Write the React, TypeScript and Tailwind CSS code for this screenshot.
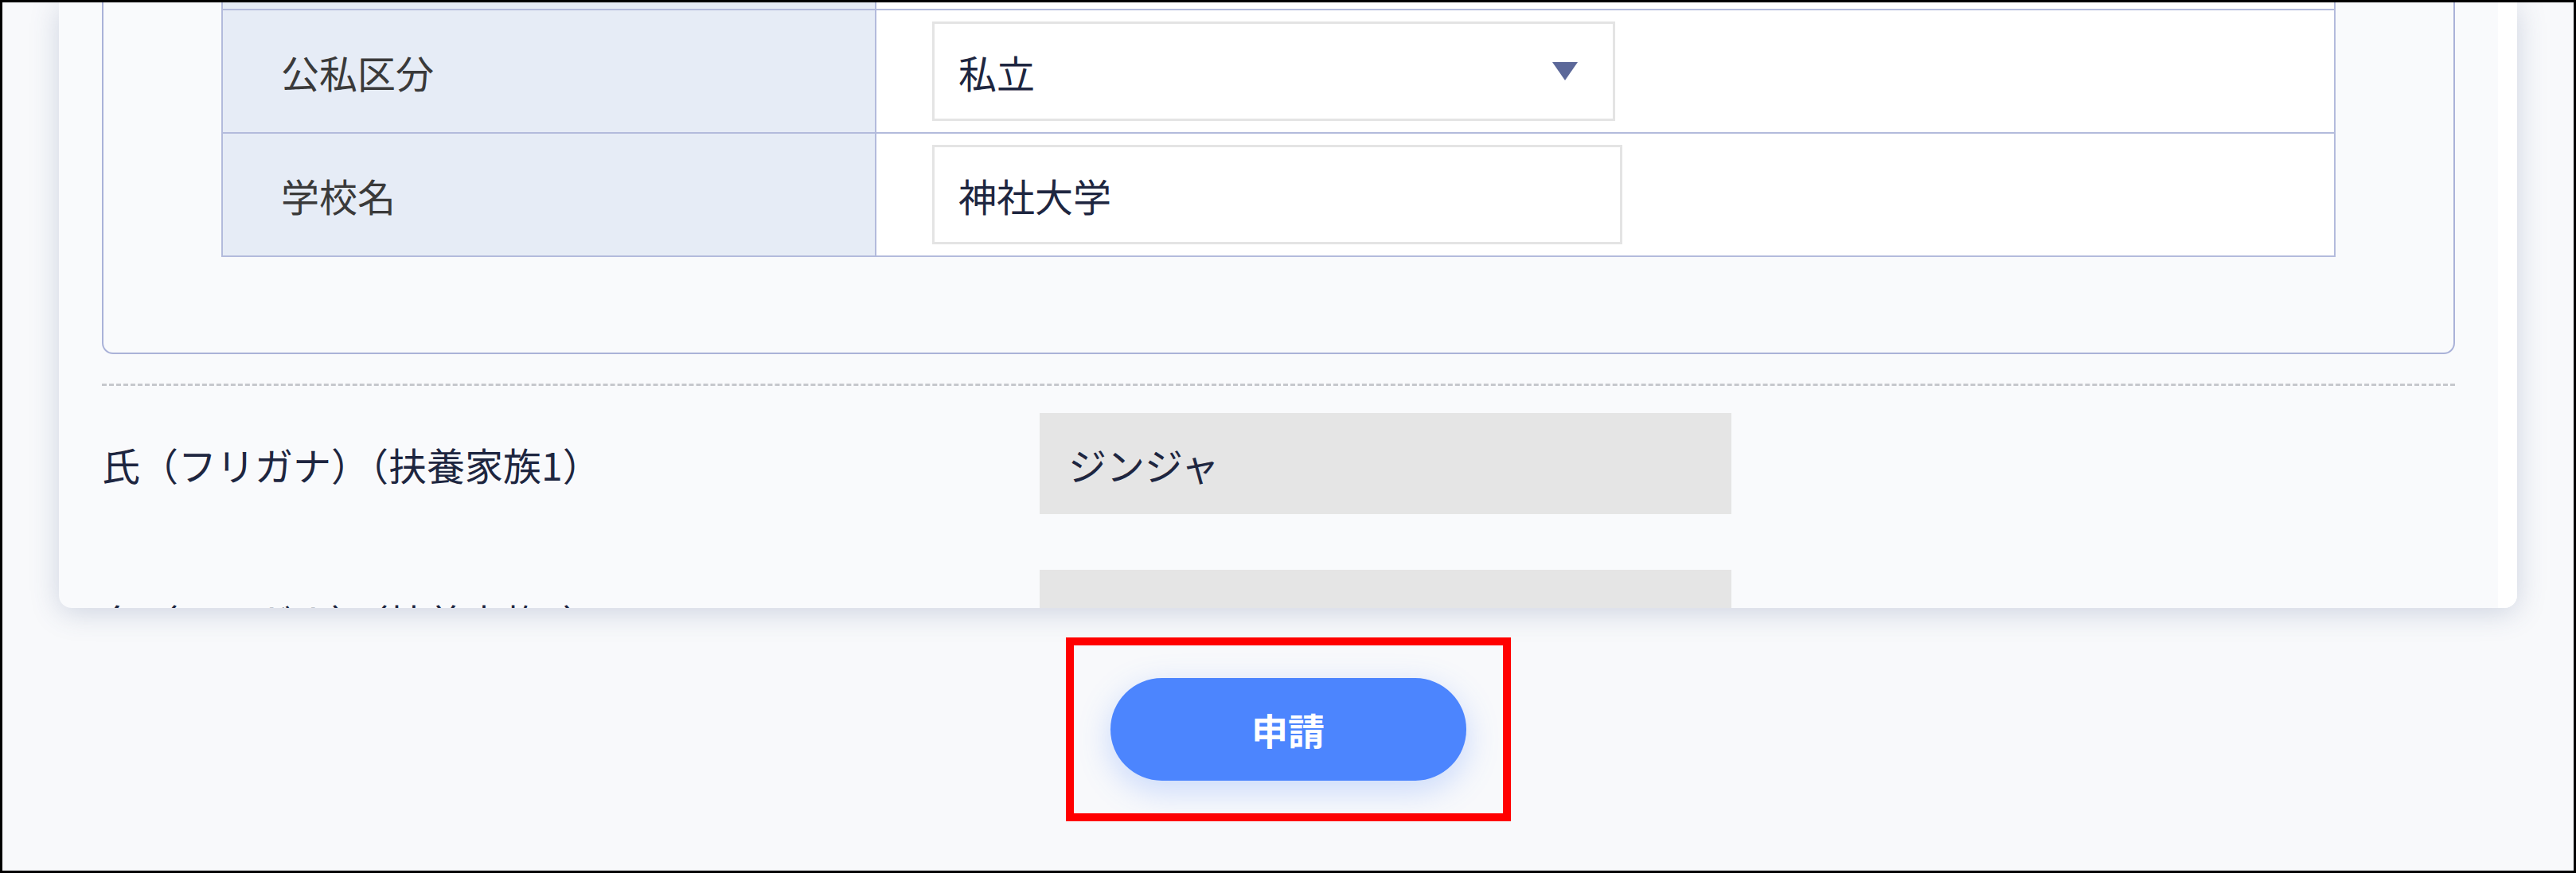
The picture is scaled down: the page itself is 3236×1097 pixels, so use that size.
const font = { fontFamily: '"Noto Sans CJK JP", "Noto Sans", sans-serif' };

function TableRow({
  label,
  children,
}: {
  label?: string;
  children?: React.ReactNode;
}) {
  return (
    <div className="flex h-[155px] border-b-2 border-[#b3bbdc]">
      <div className="w-[821px] shrink-0 flex items-center pl-[73px] bg-[#e6ecf6] border-r-2 border-[#b3bbdc] text-[48px] text-[#3a3a3a]">
        {label}
      </div>
      <div className="flex-1 flex items-center pl-[70px] bg-white">{children}</div>
    </div>
  );
}

function FieldRow({ label, value }: { label: string; value?: string }) {
  return (
    <div className="flex items-center">
      <div className="w-[1178px] shrink-0 text-[48px] text-[#1e2640] leading-none">{label}</div>
      <div className="w-[869px] h-[127px] bg-[#e5e5e5] flex items-center pl-[36px] text-[48px] text-[#1e2640]">
        {value}
      </div>
    </div>
  );
}

export default function App() {
  return (
    <div
      className="w-[3236px] h-[1097px] border-[3px] border-black bg-[#f8f9fb] overflow-hidden flex flex-col items-center"
      style={font}
    >
      {/* scroll card */}
      <div className="w-[3088px] h-[761px] shrink-0 flex rounded-b-[16px] bg-[#f9fafc] overflow-hidden shadow-[0_6px_36px_rgba(60,80,130,0.22)]">
        <div className="flex-1 px-[54px] overflow-hidden">
          {/* inner bordered box */}
          <div className="-mt-[189px] pt-[40px] pb-[120px] px-[148px] border-2 border-[#aab2d8] rounded-[14px]">
            <div className="border-x-2 border-t-2 border-[#b3bbdc]">
              <TableRow />
              <TableRow label="公私区分">
                <div className="w-[858px] h-[125px] border-[3px] border-[#e4e4e4] bg-white flex items-center justify-between pl-[30px] pr-[44px] text-[48px] text-[#1e2640]">
                  <span>私立</span>
                  <svg width="32" height="23" viewBox="0 0 32 23">
                    <path d="M0 0 H32 L16 23 Z" fill="#5c6899" />
                  </svg>
                </div>
              </TableRow>
              <TableRow label="学校名">
                <div className="w-[867px] h-[125px] border-[3px] border-[#e4e4e4] bg-white flex items-center pl-[30px] text-[48px] text-[#1e2640]">
                  神社大学
                </div>
              </TableRow>
            </div>
          </div>

          <div className="mt-[37px] border-t-[3px] border-dashed border-[#c6c8cd]" />

          <div className="mt-[34px] flex flex-col gap-[70px]">
            <FieldRow label="氏（フリガナ）（扶養家族1）" value="ジンジャ" />
            <FieldRow label="名（フリガナ）（扶養家族1）" />
          </div>
        </div>
        {/* scrollbar track */}
        <div className="w-[24px] shrink-0 bg-white" />
      </div>

      {/* highlighted submit */}
      <div className="mt-[37px] border-[10px] border-[#ff0000] px-[46px] py-[41px]">
        <button className="w-[447px] h-[129px] rounded-full bg-[#4c85fe] text-white text-[46px] font-bold shadow-[0_12px_40px_rgba(76,133,254,0.28)]">
          申請
        </button>
      </div>
    </div>
  );
}
